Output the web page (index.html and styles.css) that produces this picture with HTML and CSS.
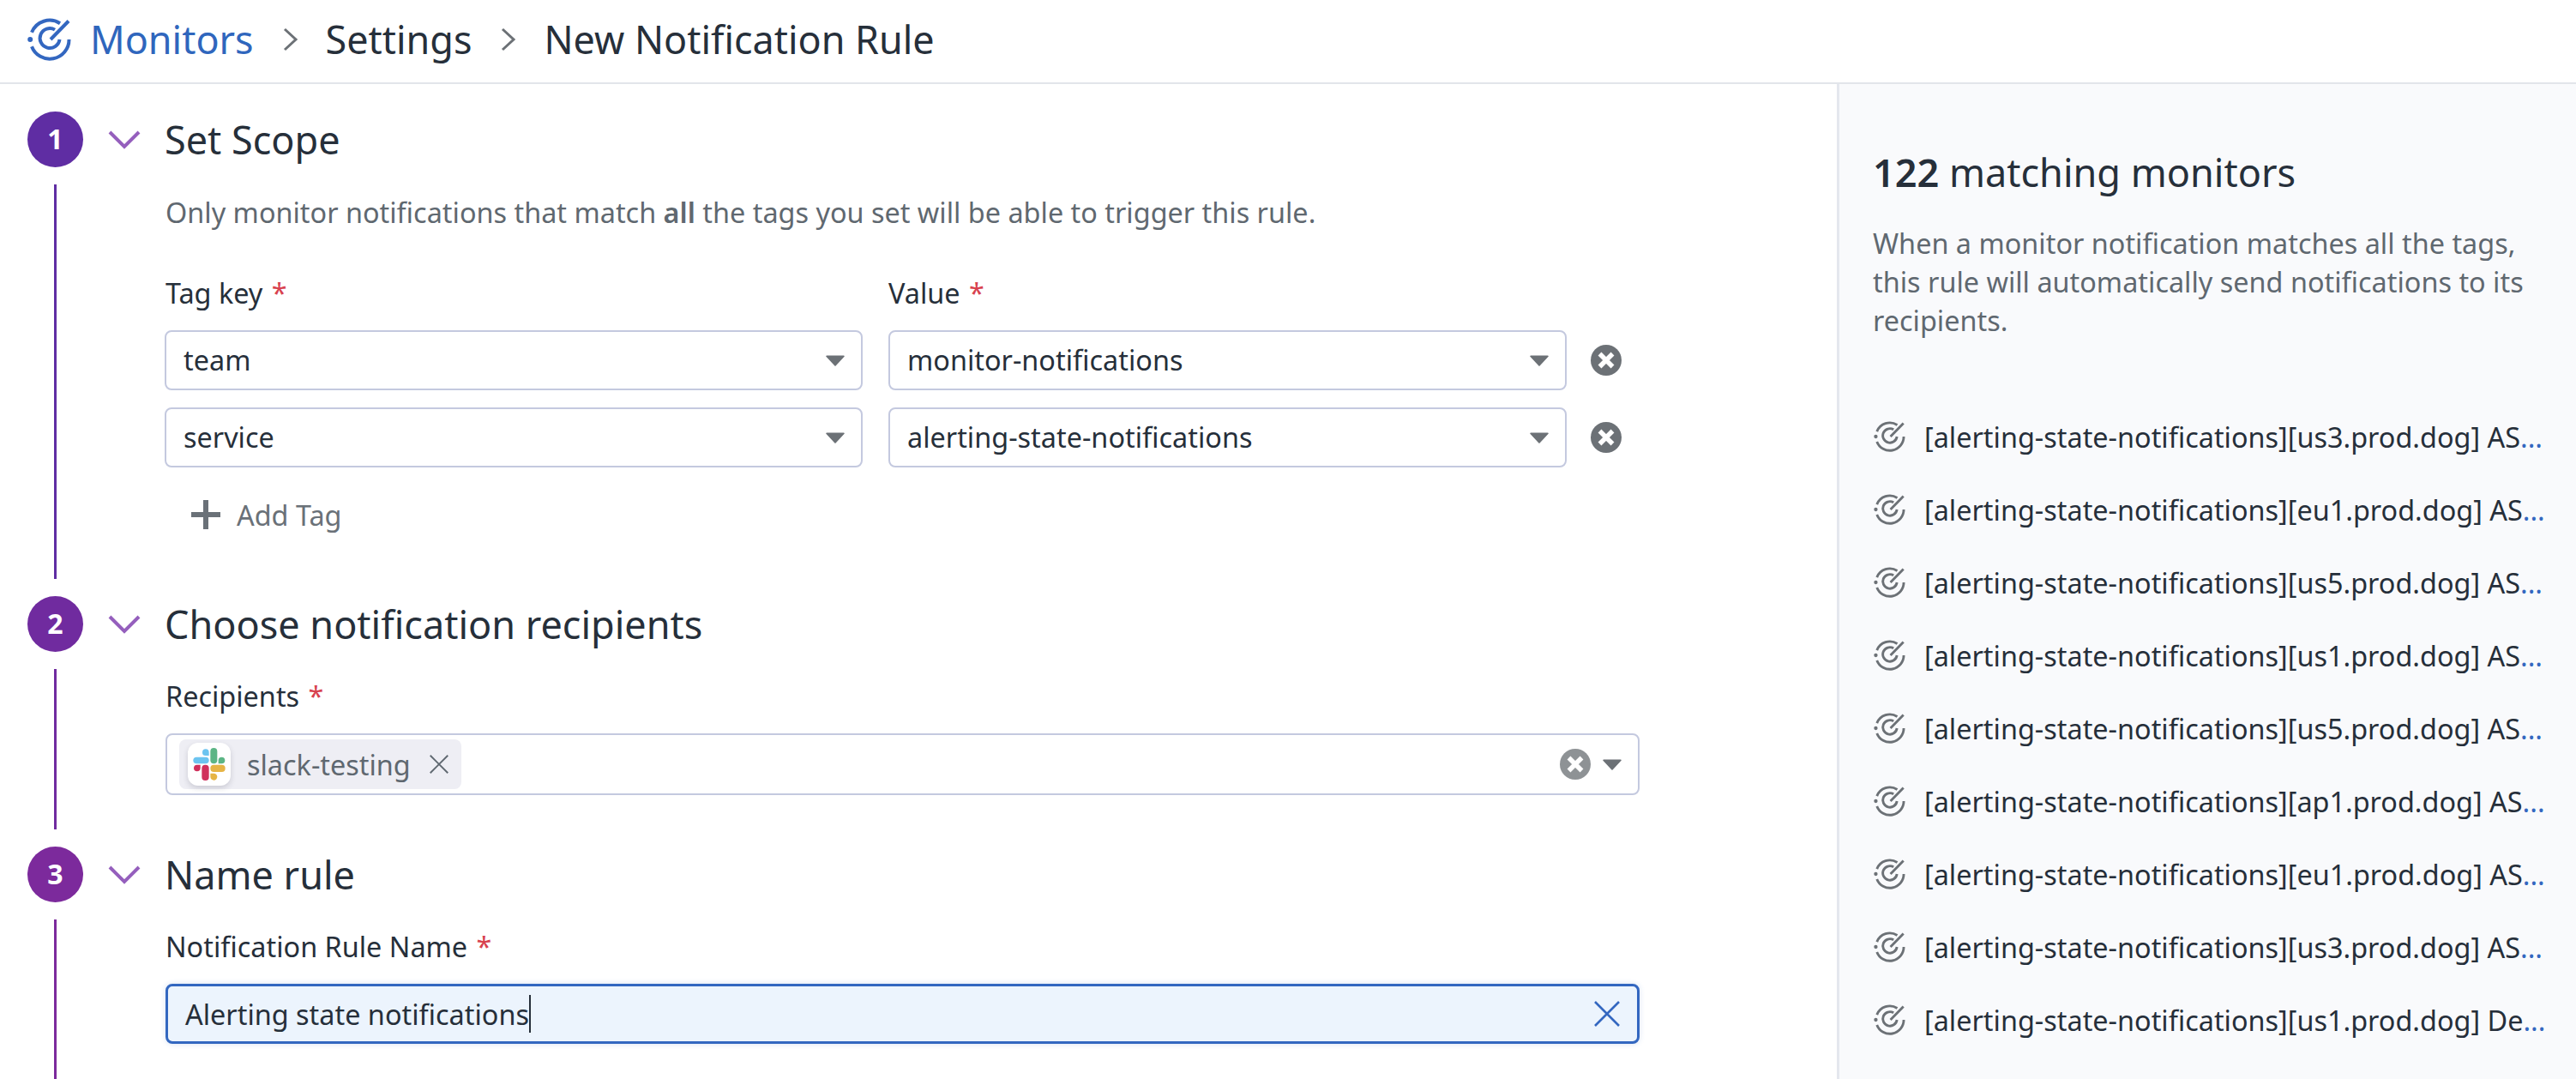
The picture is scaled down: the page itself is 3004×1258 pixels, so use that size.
FILE: index.html
```html
<!DOCTYPE html>
<html lang="en">
<head>
<meta charset="utf-8">
<title>New Notification Rule</title>
<link rel="stylesheet" href="styles.css">
</head>
<body>
<svg class="defs" width="0" height="0" aria-hidden="true">
  <symbol id="monitor" viewBox="0 0 51 50">
    <g fill="none" stroke="currentColor" stroke-width="4">
      <path d="M38 6.2A22.5 22.5 0 0 0 5 16.8"/>
      <path d="M5 33.2A22.5 22.5 0 0 0 48.5 25"/>
      <path d="M32 13.6A11.5 11.5 0 1 0 37.5 25"/>
      <path d="M27 25L48 3.5"/>
    </g>
    <circle cx="3.2" cy="25" r="3" fill="currentColor"/>
  </symbol>
  <symbol id="chev" viewBox="0 0 18 28">
    <path d="M2 2l13 12L2 26" fill="none" stroke="currentColor" stroke-width="3"/>
  </symbol>
  <symbol id="down" viewBox="0 0 38 22">
    <path d="M2 2l17 17L36 2" fill="none" stroke="currentColor" stroke-width="4"/>
  </symbol>
  <symbol id="caret" viewBox="0 0 22 13">
    <path d="M1 .5h20a.8.8 0 0 1 .6 1.3L11.6 12.4a.8.8 0 0 1-1.2 0L.4 1.8A.8.8 0 0 1 1 .5z" fill="currentColor"/>
  </symbol>
  <symbol id="clear" viewBox="0 0 36 36">
    <circle cx="18" cy="18" r="18" fill="currentColor"/>
    <path d="M10.500 10.500l15 15M25.500 10.500l-15 15" stroke="#fff" stroke-width="5.500"/>
  </symbol>
  <symbol id="thin-x" viewBox="0 0 30 30">
    <path d="M1 1l28 28M29 1L1 29" fill="none" stroke="currentColor" stroke-width="2.600"/>
  </symbol>
</svg>

<header class="topbar">
  <svg class="crumb-icon"><use href="#monitor"/></svg>
  <a class="crumb link">Monitors</a>
  <svg class="crumb-sep"><use href="#chev"/></svg>
  <span class="crumb">Settings</span>
  <svg class="crumb-sep"><use href="#chev"/></svg>
  <span class="crumb">New Notification Rule</span>
</header>

<main class="layout">
  <section class="form">
    <article class="step step-one">
      <div class="rail">
        <div class="num">1</div>
        <div class="line"></div>
      </div>
      <svg class="toggle"><use href="#down"/></svg>
      <div class="body">
        <h2 class="title">Set Scope</h2>
        <p class="hint">Only monitor notifications that match <b>all</b> the tags you set will be able to trigger this rule.</p>
        <div class="row labels">
          <div class="col-key label">Tag key <span class="req">*</span></div>
          <div class="col-val label">Value <span class="req">*</span></div>
        </div>
        <div class="row">
          <div class="col-key select"><span>team</span><svg class="caret"><use href="#caret"/></svg></div>
          <div class="col-val select"><span>monitor-notifications</span><svg class="caret"><use href="#caret"/></svg></div>
          <svg class="remove"><use href="#clear"/></svg>
        </div>
        <div class="row second">
          <div class="col-key select"><span>service</span><svg class="caret"><use href="#caret"/></svg></div>
          <div class="col-val select"><span>alerting-state-notifications</span><svg class="caret"><use href="#caret"/></svg></div>
          <svg class="remove"><use href="#clear"/></svg>
        </div>
        <div class="add">
          <svg class="plus" viewBox="0 0 34 34"><path d="M17 0v34M0 17h34" stroke="currentColor" stroke-width="6"/></svg>
          <span>Add Tag</span>
        </div>
      </div>
    </article>

    <article class="step step-two">
      <div class="rail">
        <div class="num">2</div>
        <div class="line"></div>
      </div>
      <svg class="toggle"><use href="#down"/></svg>
      <div class="body">
        <h2 class="title">Choose notification recipients</h2>
        <div class="label first">Recipients <span class="req">*</span></div>
        <div class="multi">
          <div class="chip">
            <span class="tile">
              <svg class="slack" viewBox="0 0 112 114">
                <path d="M55 27H43.500a11.500 11.500 0 1 1 11.500-11.500z" fill="#6cc4f0"/>
                <rect x="0" y="32" width="55" height="23" rx="11.500" fill="#6cc4f0"/>
                <rect x="60" y="0" width="24" height="55" rx="12" fill="#5cb585"/>
                <path d="M88 55V43.500a11.500 11.500 0 1 1 11.500 11.500z" fill="#5cb585"/>
                <rect x="30" y="59" width="25" height="55" rx="12" fill="#d0305c"/>
                <path d="M25 59v11.500a11.500 11.500 0 1 1-11.500-11.500z" fill="#d0305c"/>
                <rect x="60" y="59" width="52" height="25" rx="12" fill="#e6b445"/>
                <path d="M60 89h11.500a12 12 0 1 1-11.500 12z" fill="#e6b445"/>
              </svg>
            </span>
            <span class="chip-text">slack-testing</span>
            <svg class="chip-x"><use href="#thin-x"/></svg>
          </div>
          <svg class="multi-clear"><use href="#clear"/></svg>
          <svg class="caret multi-caret"><use href="#caret"/></svg>
        </div>
      </div>
    </article>

    <article class="step step-three">
      <div class="rail">
        <div class="num">3</div>
        <div class="line"></div>
      </div>
      <svg class="toggle"><use href="#down"/></svg>
      <div class="body">
        <h2 class="title">Name rule</h2>
        <div class="label first">Notification Rule Name <span class="req">*</span></div>
        <div class="input">
          <span class="typed">Alerting state notifications</span>
          <svg class="input-x"><use href="#thin-x"/></svg>
        </div>
      </div>
    </article>
  </section>

  <aside class="panel">
    <h2 class="panel-title"><b>122</b> matching monitors</h2>
    <p class="panel-text">When a monitor notification matches all the tags, this rule will automatically send notifications to its recipients.</p>
    <ul class="list">
      <li><svg class="mon"><use href="#monitor"/></svg><span>[alerting-state-notifications][us3.prod.dog] AS<i>...</i></span></li>
      <li><svg class="mon"><use href="#monitor"/></svg><span>[alerting-state-notifications][eu1.prod.dog] AS<i>...</i></span></li>
      <li><svg class="mon"><use href="#monitor"/></svg><span>[alerting-state-notifications][us5.prod.dog] AS<i>...</i></span></li>
      <li><svg class="mon"><use href="#monitor"/></svg><span>[alerting-state-notifications][us1.prod.dog] AS<i>...</i></span></li>
      <li><svg class="mon"><use href="#monitor"/></svg><span>[alerting-state-notifications][us5.prod.dog] AS<i>...</i></span></li>
      <li><svg class="mon"><use href="#monitor"/></svg><span>[alerting-state-notifications][ap1.prod.dog] AS<i>...</i></span></li>
      <li><svg class="mon"><use href="#monitor"/></svg><span>[alerting-state-notifications][eu1.prod.dog] AS<i>...</i></span></li>
      <li><svg class="mon"><use href="#monitor"/></svg><span>[alerting-state-notifications][us3.prod.dog] AS<i>...</i></span></li>
      <li><svg class="mon"><use href="#monitor"/></svg><span>[alerting-state-notifications][us1.prod.dog] De<i>...</i></span></li>
    </ul>
  </aside>
</main>
</body>
</html>
```
FILE: styles.css
```css
* { box-sizing: border-box; }
html, body { margin: 0; height: 100%; }
body {
  display: flex;
  flex-direction: column;
  height: 1258px;
  overflow: hidden;
  background: #fff;
  color: #262f3a;
  font-family: "Noto Sans", "Open Sans", sans-serif;
  font-size: 32.4px;
}
.defs { position: absolute; }

.topbar {
  flex: none;
  height: 98px;
  display: flex;
  align-items: center;
  padding: 0 0 4px 32px;
  border-bottom: 2px solid #e2e5ea;
  font-size: 44.9px;
}
.crumb-icon { width: 51px; height: 50px; color: #3367c0; margin-right: 22px; }
.crumb { line-height: 60px; }
.link { color: #2f66bd; }
.crumb-sep { width: 18px; height: 28px; color: #6c7176; margin: 0 32px 0 34px; }

.layout { flex: 1; min-height: 0; display: flex; }
.form { flex: 1; min-width: 0; display: flex; flex-direction: column; padding: 32px 0 0 32px; overflow: hidden; }

.step { display: flex; }
.step-three { flex: 1; }
.rail { flex: none; width: 65px; display: flex; flex-direction: column; align-items: center; }
.num {
  flex: none;
  width: 65px;
  height: 65px;
  border-radius: 50%;
  display: flex;
  align-items: center;
  justify-content: center;
  color: #fff;
  font-size: 32px;
  font-weight: 700;
  padding-bottom: 2px;
}
.line { flex: 1; width: 3px; margin: 20px 0; }
.step-three .line { margin-bottom: 0; }
.step-one .num, .step-one .line { background: #5f2da3; }
.step-two .num, .step-two .line { background: #702b9f; }
.step-three .num, .step-three .line { background: #7c2a9c; }

.toggle { flex: none; width: 38px; height: 22px; margin: 22px 28px 0 29px; color: #955fbd; }
.body { flex: none; width: 1720px; }
.step-one .body { padding-bottom: 73px; }
.step-two .body { padding-bottom: 60px; }

.title { margin: 0; font-size: 45px; font-weight: 400; line-height: 65px; }
.hint { margin: 30px 0 0 1px; line-height: 44px; color: #5f6870; }
.hint b { font-weight: 600; }

.row { display: flex; align-items: center; }
.second { margin-top: 20px; }
.labels { margin-top: 50px; margin-bottom: 22px; }
.label { line-height: 44px; }
.first { margin: 29px 0 22px 1px; }
.req { color: #d8424f; margin-left: 2px; }
.col-key { width: 814px; margin-right: 30px; }
.col-val { width: 791px; margin-right: 28px; }
.labels .col-key { padding-left: 1px; }

.select {
  height: 70px;
  display: flex;
  align-items: center;
  justify-content: space-between;
  padding: 0 19px 0 20px;
  border: 2px solid #c4c9df;
  border-radius: 8px;
  background: #fff;
}
.select span { margin-bottom: 2px; }
.caret { flex: none; width: 22px; height: 13px; color: #6c7176; }
.remove { flex: none; width: 36px; height: 36px; color: #6c7176; }

.add { display: flex; align-items: center; margin: 33px 0 0 31px; height: 44px; color: #6a7178; }
.plus { width: 34px; height: 34px; margin-right: 19px; }

.multi {
  width: 1719px;
  height: 72px;
  display: flex;
  align-items: center;
  padding: 0 19px 0 14px;
  border: 2px solid #c4c9df;
  border-radius: 8px;
  margin-left: 1px;
}
.chip {
  height: 58px;
  width: 329px;
  display: flex;
  align-items: center;
  padding-left: 10px;
  border-radius: 8px;
  background: #eeeef4;
  color: #5f6870;
}
.tile {
  flex: none;
  width: 50px;
  height: 50px;
  display: flex;
  align-items: center;
  justify-content: center;
  background: #fff;
  border-radius: 12px;
  box-shadow: 0 3px 6px rgba(50, 50, 70, .18);
  margin-right: 19px;
}
.slack { width: 38px; height: 38px; }
.chip-text { width: 213px; }
.chip-x { flex: none; width: 22px; height: 22px; color: #5f6870; }
.multi-clear { flex: none; width: 36px; height: 36px; margin-left: auto; color: #8e9295; }
.multi-caret { margin-left: 14px; }

.input {
  width: 1719px;
  height: 70px;
  display: flex;
  align-items: center;
  padding: 0 20px 0 20px;
  border: 3px solid #3367c0;
  border-radius: 8px;
  background: #ecf4fd;
  box-shadow: 0 0 6px rgba(51, 103, 192, .2);
  margin-left: 1px;
}
.typed { border-right: 2px solid #262f3a; line-height: 44px; }
.input-x { flex: none; width: 30px; height: 30px; margin-left: auto; color: #3367c0; }

.panel {
  flex: none;
  width: 862px;
  padding: 73px 0 0 39px;
  border-left: 3px solid #e4e7ee;
  background: #f9fafc;
}
.panel-title { margin: 0; font-size: 45px; font-weight: 400; line-height: 60px; }
.panel-title b { font-weight: 600; }
.panel-text { margin: 30px 0 0; width: 792px; line-height: 45px; color: #5f6870; }
.list { list-style: none; margin: 70px 0 0 1px; padding: 0; }
.list li { height: 85px; display: flex; align-items: center; white-space: nowrap; }
.mon { flex: none; width: 37px; height: 36px; color: #6c7176; margin-right: 22px; }
.list i { font-style: normal; color: #3367c0; }
```
